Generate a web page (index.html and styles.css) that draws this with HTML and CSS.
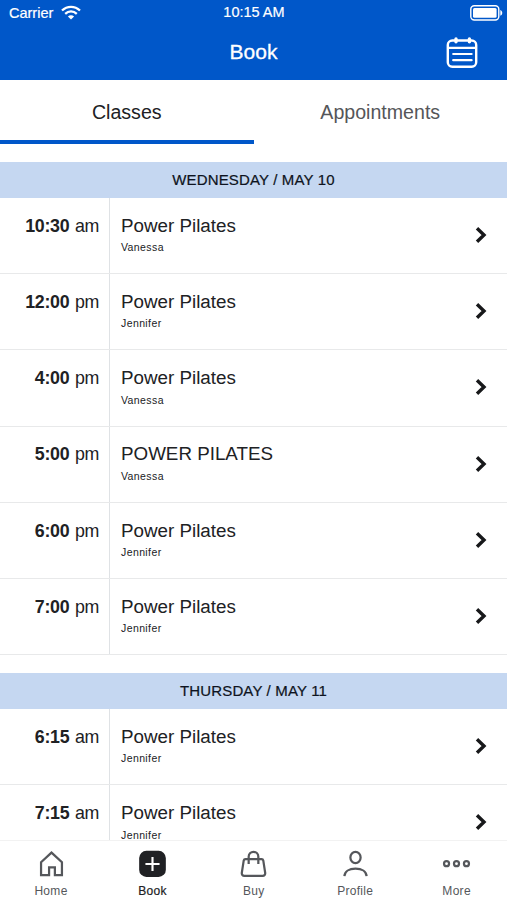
FILE: index.html
```html
<!DOCTYPE html>
<html lang="en">
<head>
<meta charset="utf-8">
<title>Book</title>
<link rel="stylesheet" href="styles.css">
</head>
<body>
<div class="app">
  <header class="top">
    <div class="status">
      <div class="carrier"><span>Carrier</span>
        <svg width="20" height="15" viewBox="0 0 20 15" fill="none" stroke="#fff" stroke-width="2.3"><path d="M1 5.500C6.200.6 13.800.6 19 5.500M4.200 8.800c3.400-3.200 8.200-3.200 11.600 0"/><path d="M10 14.600 6.900 11.600c1.800-1.700 4.400-1.700 6.200 0z" fill="#fff" stroke="none"/></svg>
      </div>
      <div class="clock">10:15 AM</div>
      <svg class="battery" width="33" height="16" viewBox="0 0 33 16"><rect x=".8" y=".8" width="28" height="14.2" rx="3.5" fill="none" stroke="#fff" stroke-width="1.4"/><rect x="3" y="3" width="23.6" height="9.8" rx="1.5" fill="#fff"/><path d="M30.300 5c2.600.8 2.600 5 0 5.800z" fill="#fff"/></svg>
    </div>
    <div class="titlebar">
      <h1>Book</h1>
      <svg class="calendar" width="32" height="32" viewBox="0 0 32 32" fill="none" stroke="#fff" stroke-width="2.4" stroke-linecap="round"><rect x="1.8" y="3.500" width="28.400" height="26.300" rx="4.5"/><path d="M2 10.800h28M7.200 17h18.400M7.200 23.200h18.400" stroke-width="2.2"/><path d="M10 2v2.800M23.400 2v2.800" stroke-width="3.400"/></svg>
    </div>
  </header>
  <nav class="tabs">
    <div class="tab active">Classes</div>
    <div class="tab">Appointments</div>
  </nav>
  <main class="list">
    <section>
      <h2>WEDNESDAY / MAY 10</h2>
      <div class="row"><div class="time"><b>10:30</b> am</div><div class="info"><p>Power Pilates</p><small>Vanessa</small></div><svg class="go" viewBox="0 0 12 18"><path d="M2 2.200 9 9l-7 6.800"/></svg></div>
      <div class="row"><div class="time"><b>12:00</b> pm</div><div class="info"><p>Power Pilates</p><small>Jennifer</small></div><svg class="go" viewBox="0 0 12 18"><path d="M2 2.200 9 9l-7 6.800"/></svg></div>
      <div class="row"><div class="time"><b>4:00</b> pm</div><div class="info"><p>Power Pilates</p><small>Vanessa</small></div><svg class="go" viewBox="0 0 12 18"><path d="M2 2.200 9 9l-7 6.800"/></svg></div>
      <div class="row"><div class="time"><b>5:00</b> pm</div><div class="info"><p>POWER PILATES</p><small>Vanessa</small></div><svg class="go" viewBox="0 0 12 18"><path d="M2 2.200 9 9l-7 6.800"/></svg></div>
      <div class="row"><div class="time"><b>6:00</b> pm</div><div class="info"><p>Power Pilates</p><small>Jennifer</small></div><svg class="go" viewBox="0 0 12 18"><path d="M2 2.200 9 9l-7 6.800"/></svg></div>
      <div class="row"><div class="time"><b>7:00</b> pm</div><div class="info"><p>Power Pilates</p><small>Jennifer</small></div><svg class="go" viewBox="0 0 12 18"><path d="M2 2.200 9 9l-7 6.800"/></svg></div>
    </section>
    <section>
      <h2>THURSDAY / MAY 11</h2>
      <div class="row"><div class="time"><b>6:15</b> am</div><div class="info"><p>Power Pilates</p><small>Jennifer</small></div><svg class="go" viewBox="0 0 12 18"><path d="M2 2.200 9 9l-7 6.800"/></svg></div>
      <div class="row"><div class="time"><b>7:15</b> am</div><div class="info"><p>Power Pilates</p><small>Jennifer</small></div><svg class="go" viewBox="0 0 12 18"><path d="M2 2.200 9 9l-7 6.800"/></svg></div>
    </section>
  </main>
  <footer class="dock">
    <div class="item"><svg viewBox="0 0 30 30"><path d="M4.200 13.200 15 3.200l10.800 10v13.400h-7.300v-8h-6v8H4.200z"/></svg><span>Home</span></div>
    <div class="item current"><svg viewBox="0 0 30 30"><rect x="1.2" y="1.400" width="27.600" height="27" rx="7.5" fill="#202124" stroke="none"/><path d="M15 7.700v14.600M7.700 15h14.600" stroke="#fff" stroke-width="2.2"/></svg><span>Book</span></div>
    <div class="item"><svg viewBox="0 0 30 30"><path d="M6.600 9.900h16.800c1 0 1.500.5 1.700 1.400l2 12.800c.2 1.800-.8 3.100-2.600 3.100h-19c-1.800 0-2.800-1.300-2.600-3.100l2-12.800c.2-.9.700-1.400 1.700-1.400zM10 15V7.500c0-6.800 10-6.800 10 0V15"/></svg><span>Buy</span></div>
    <div class="item"><svg viewBox="0 0 30 30"><ellipse cx="15" cy="8.300" rx="5.300" ry="5.900"/><path d="M3.500 27.600c.3-5 5-7.800 11.500-7.800s11.200 2.800 11.500 7.800"/></svg><span>Profile</span></div>
    <div class="item"><svg viewBox="0 0 30 30"><circle cx="4.700" cy="14.700" r="2.600"/><circle cx="15" cy="14.700" r="2.600"/><circle cx="25.300" cy="14.700" r="2.600"/></svg><span>More</span></div>
  </footer>
</div>
</body>
</html>
```
FILE: styles.css
```css
* { box-sizing: border-box; }
body { margin: 0; font-family: "Liberation Sans", Arial, sans-serif; color: #202124; background: #fff; }
h1, h2, p { margin: 0; font-weight: 400; }
.app { height: 900px; display: flex; flex-direction: column; overflow: hidden; }
.top { height: 80px; flex: none; background: #0057c9; color: #fff; }
.status { height: 25px; display: grid; grid-template-columns: 1fr auto 1fr; align-items: center; padding: 0 4px 0 9px; font-size: 14.500px; -webkit-text-stroke: .2px #fff; }
.carrier { display: flex; align-items: center; gap: 8px; }
.clock { padding: 0 4px 2px 0; }
.battery { justify-self: end; }
.titlebar { height: 55px; display: grid; grid-template-columns: 1fr auto 1fr; align-items: center; }
.titlebar h1 { grid-column: 2; font-size: 21px; line-height: 54px; padding-bottom: 1px; -webkit-text-stroke: .3px #fff; }
.calendar { justify-self: end; margin-right: 29px; }
.tabs { display: flex; height: 64px; flex: none; }
.tab { flex: 1; text-align: center; line-height: 64px; font-size: 19.600px; color: #555659; border-bottom: 4px solid transparent; }
.tab.active { color: #202124; border-color: #0057c9; }
.list { flex: 1; min-height: 0; overflow: hidden; padding-top: 18px; }
section { margin-bottom: 18px; }
h2 { height: 36px; line-height: 36px; background: #c5d7f1; color: #0e1320; text-align: center; font-size: 15px; letter-spacing: .15px; -webkit-text-stroke: .2px #0e1320; }
.row { height: 76.200px; display: flex; border-bottom: 1px solid #e8e9ea; }
.time { width: 110px; border-right: 1px solid #dfe2e5; padding: 16.800px 10px 0 0; text-align: right; font-size: 17.800px; line-height: 22px; letter-spacing: -.3px; word-spacing: 1px; }
.info { flex: 1; padding: 15.800px 0 0 11px; }
.info p { font-size: 18.800px; line-height: 24px; }
.info small { display: block; font-size: 10.500px; line-height: 14px; margin-top: 2.500px; letter-spacing: .4px; }
.go { width: 12px; height: 18px; align-self: center; margin: 0 20.500px 1px 0; fill: none; stroke: #17181a; stroke-width: 3.400; }
.dock { height: 60px; flex: none; display: flex; border-top: 1px solid #f2f2f2; background: #fff; }
.item { flex: 1; display: flex; flex-direction: column; align-items: center; padding: 8px 0 0 .6px; color: #55575b; font-size: 12px; letter-spacing: .3px; line-height: 16px; }
.item svg { width: 29px; height: 30px; fill: none; stroke: #55575b; stroke-width: 2.300; margin-bottom: 4px; }
.current { color: #202124; -webkit-text-stroke: .2px #202124; }
```
